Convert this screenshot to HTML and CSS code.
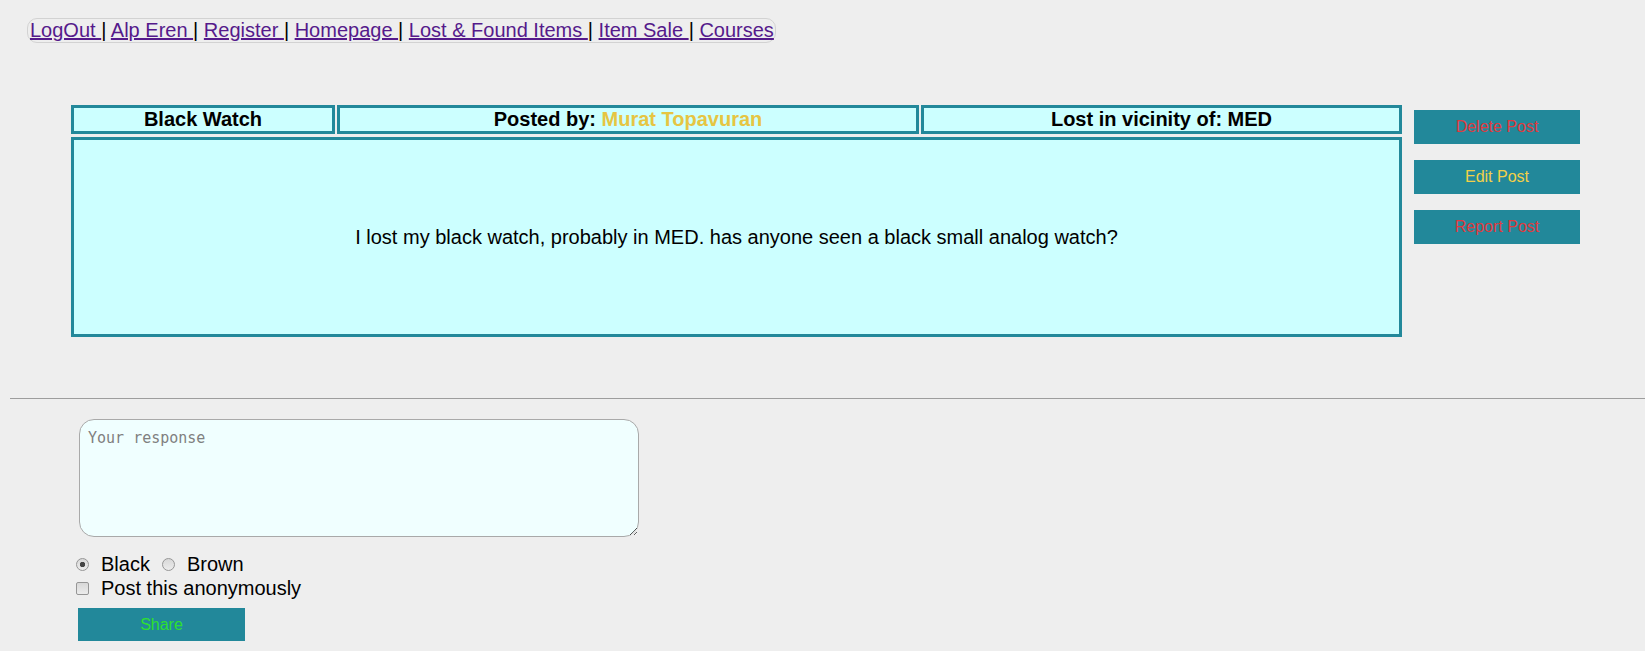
FILE: index.html
```html
<!DOCTYPE html>
<html lang="en">
<head>
<meta charset="utf-8">
<title>Black Watch</title>
<link rel="stylesheet" href="styles.css">
</head>
<body>
<nav class="topnav"><a href="#">LogOut </a>| <a href="#">Alp Eren </a>| <a href="#">Register </a>| <a href="#">Homepage </a>| <a href="#">Lost &amp; Found Items </a>| <a href="#">Item Sale </a>| <a href="#">Courses</a></nav>

<main class="post-area">
  <section class="post">
    <div class="post-head">
      <div class="cell">Black Watch</div>
      <div class="cell">Posted by: <span class="author">Murat Topavuran</span></div>
      <div class="cell">Lost in vicinity of: MED</div>
    </div>
    <div class="post-body">I lost my black watch, probably in MED. has anyone seen a black small analog watch?</div>
  </section>
  <div class="actions">
    <button class="btn btn-danger" type="button">Delete Post</button>
    <button class="btn btn-edit" type="button">Edit Post</button>
    <button class="btn btn-danger" type="button">Report Post</button>
  </div>
</main>

<hr class="divider">

<form class="reply">
  <textarea class="response" placeholder="Your response"></textarea>
  <div class="choice-row first">
    <label class="choice"><input type="radio" name="color" checked> Black</label>
    <label class="choice"><input type="radio" name="color"> Brown</label>
  </div>
  <div class="choice-row">
    <label class="choice"><input type="checkbox"> Post this anonymously</label>
  </div>
  <button class="btn btn-share" type="button">Share</button>
</form>
</body>
</html>
```

FILE: styles.css
```css
html, body {
  margin: 0;
  padding: 0;
}

body {
  background: #eeeeee;
  font-family: "Liberation Sans", Arial, sans-serif;
  font-size: 20px;
  color: #000;
}

.topnav {
  display: block;
  width: max-content;
  margin: 18px 0 0 27px;
  padding: 0 1px 0 2px;
  border: 1px solid #d2d2d2;
  border-radius: 10px;
  line-height: 23px;
  font-size: 20px;
  white-space: nowrap;
}

.topnav a {
  color: #551a8b;
  text-decoration: underline;
}

.post-area {
  display: flex;
  align-items: flex-start;
  gap: 12px;
  margin: 62px 0 0 71px;
}

.post {
  width: 1331px;
}

.post-head {
  display: grid;
  grid-template-columns: 264px 582px 1fr;
  column-gap: 2px;
}

.cell {
  border: 3px solid #22889a;
  background: #ccffff;
  text-align: center;
  font-weight: bold;
  line-height: 23px;
}

.author {
  color: #e6c542;
}

.post-body {
  box-sizing: border-box;
  height: 200px;
  margin-top: 3px;
  border: 3px solid #22889a;
  background: #ccffff;
  display: flex;
  align-items: center;
  justify-content: center;
  line-height: 23px;
}

.actions {
  display: flex;
  flex-direction: column;
  gap: 16px;
  margin-top: 5px;
}

.btn {
  border: none;
  background: #22889a;
  font-family: "Liberation Sans", Arial, sans-serif;
  font-size: 16px;
  padding: 0;
  cursor: pointer;
}

.actions .btn {
  width: 166px;
  height: 34px;
}

.btn-danger {
  color: #e0393d;
}

.btn-edit {
  color: #f3d048;
}

.divider {
  margin: 61px 0 0 10px;
  border: 0;
  border-top: 1px solid #9d9d9d;
  height: 0;
}

.reply {
  margin: 0;
  padding-top: 20px;
}

.response {
  display: block;
  box-sizing: border-box;
  width: 560px;
  height: 118px;
  margin: 0 0 0 79px;
  padding: 9px 8px;
  border: 1px solid #a9a9a9;
  border-radius: 15px;
  background: #f0ffff;
  font-family: "DejaVu Sans Mono", "Liberation Mono", monospace;
  font-size: 15px;
}

.response::placeholder {
  color: #808080;
}

.choice-row {
  display: flex;
  align-items: center;
  padding-left: 76px;
  line-height: 24px;
}

.choice-row.first {
  margin-top: 15px;
}

.choice {
  display: inline-flex;
  align-items: center;
  gap: 12px;
}

.choice + .choice {
  margin-left: 12px;
}

.choice input {
  appearance: none;
  -webkit-appearance: none;
  box-sizing: border-box;
  width: 13px;
  height: 13px;
  margin: 0;
  border: 1px solid #969696;
  background: linear-gradient(#d8d8d8, #ececec);
}

.choice input[type="radio"] {
  border-radius: 50%;
}

.choice input[type="radio"]:checked {
  background: radial-gradient(circle, #454545 0 2.4px, transparent 3px), linear-gradient(#d8d8d8, #ececec);
}

.choice input[type="checkbox"] {
  border-radius: 2px;
}

.btn-share {
  display: block;
  width: 167px;
  height: 33px;
  margin: 8px 0 0 78px;
  color: #2ee02e;
}
```
